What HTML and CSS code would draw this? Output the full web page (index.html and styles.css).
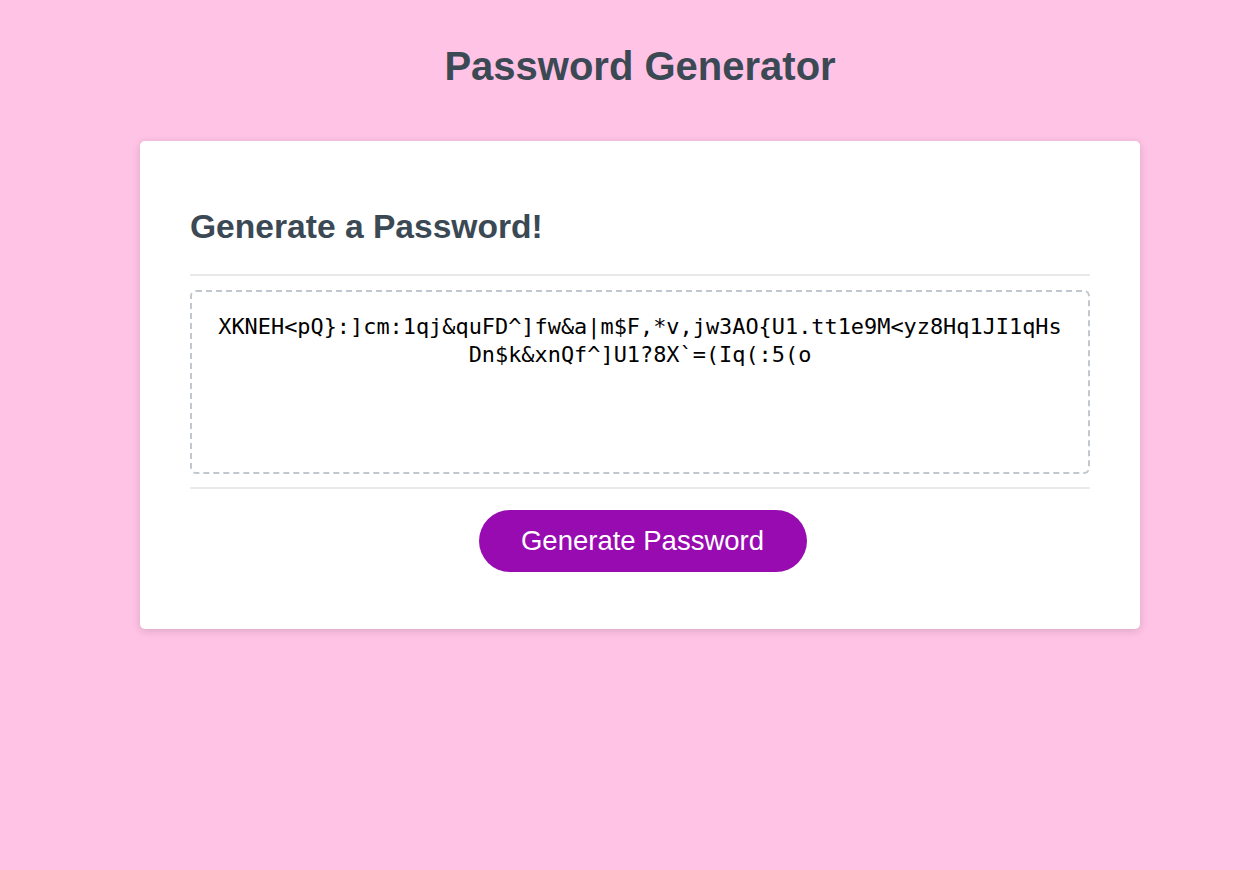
FILE: index.html
```html
<!DOCTYPE html>
<html lang="en">
<head>
<meta charset="UTF-8">
<title>Password Generator</title>
<link rel="stylesheet" href="styles.css">
</head>
<body>
<div class="wrapper">
  <header class="page-header">
    <h1>Password Generator</h1>
  </header>
  <div class="card">
    <div class="card-header">
      <h2>Generate a Password!</h2>
    </div>
    <div class="card-body">
      <textarea readonly id="password" class="password-box" aria-label="Generated Password">XKNEH&lt;pQ}:]cm:1qj&amp;quFD^]fw&amp;a|m$F,*v,jw3AO{U1.tt1e9M&lt;yz8Hq1JI1qHsDn$k&amp;xnQf^]U1?8X`=(Iq(:5(o</textarea>
    </div>
    <div class="card-footer">
      <button class="btn" type="button">Generate Password</button>
    </div>
  </div>
</div>
</body>
</html>
```
FILE: styles.css
```css
* {
  box-sizing: border-box;
}

html,
body {
  margin: 0;
  padding: 0;
}

body {
  background-color: #ffc3e5;
  font-family: "Liberation Sans", Arial, sans-serif;
  min-height: 870px;
}

.wrapper {
  padding: 43px 0 40px 20px;
}

.page-header {
  text-align: center;
  color: #3b4954;
  margin-bottom: 52px;
}

.page-header h1 {
  margin: 0;
  font-size: 40px;
  font-weight: bold;
  line-height: 46px;
}

.card {
  width: 1000px;
  margin: 0 auto;
  background-color: #ffffff;
  border-radius: 5px;
  box-shadow: rgba(0, 0, 0, 0.15) 0 2px 8px 0;
  color: #3b4954;
  padding: 66px 50px 0;
}

.card-header h2 {
  margin: 0 0 28px;
  font-size: 33.6px;
  font-weight: bold;
  line-height: 39px;
}

.card-header::after {
  content: "";
  display: block;
  height: 2px;
  background: #e7e9eb;
}

.card-body {
  padding: 14px 0 13px;
}

.password-box {
  display: block;
  width: 100%;
  height: 184px;
  border: 2px dashed #c0c7cf;
  border-radius: 6px;
  padding: 21px 20px 10px;
  resize: none;
  overflow: hidden;
  text-align: center;
  font-family: "DejaVu Sans Mono", "Liberation Mono", monospace;
  font-size: 21.9px;
  line-height: 28px;
  color: #000000;
  background: #ffffff;
  outline: none;
  word-break: break-all;
}

.card-footer {
  text-align: center;
  padding-bottom: 57px;
}

.card-footer::before {
  content: "";
  display: block;
  height: 2px;
  background: #e7e9eb;
  margin-bottom: 21px;
}

.btn {
  display: inline-block;
  border: none;
  background-color: #980bb0;
  color: #ffffff;
  border-radius: 31px;
  height: 62px;
  width: 328px;
  margin-left: 5px;
  padding: 0;
  font-family: "Liberation Sans", Arial, sans-serif;
  font-size: 27.5px;
  line-height: 62px;
  cursor: pointer;
}
```
